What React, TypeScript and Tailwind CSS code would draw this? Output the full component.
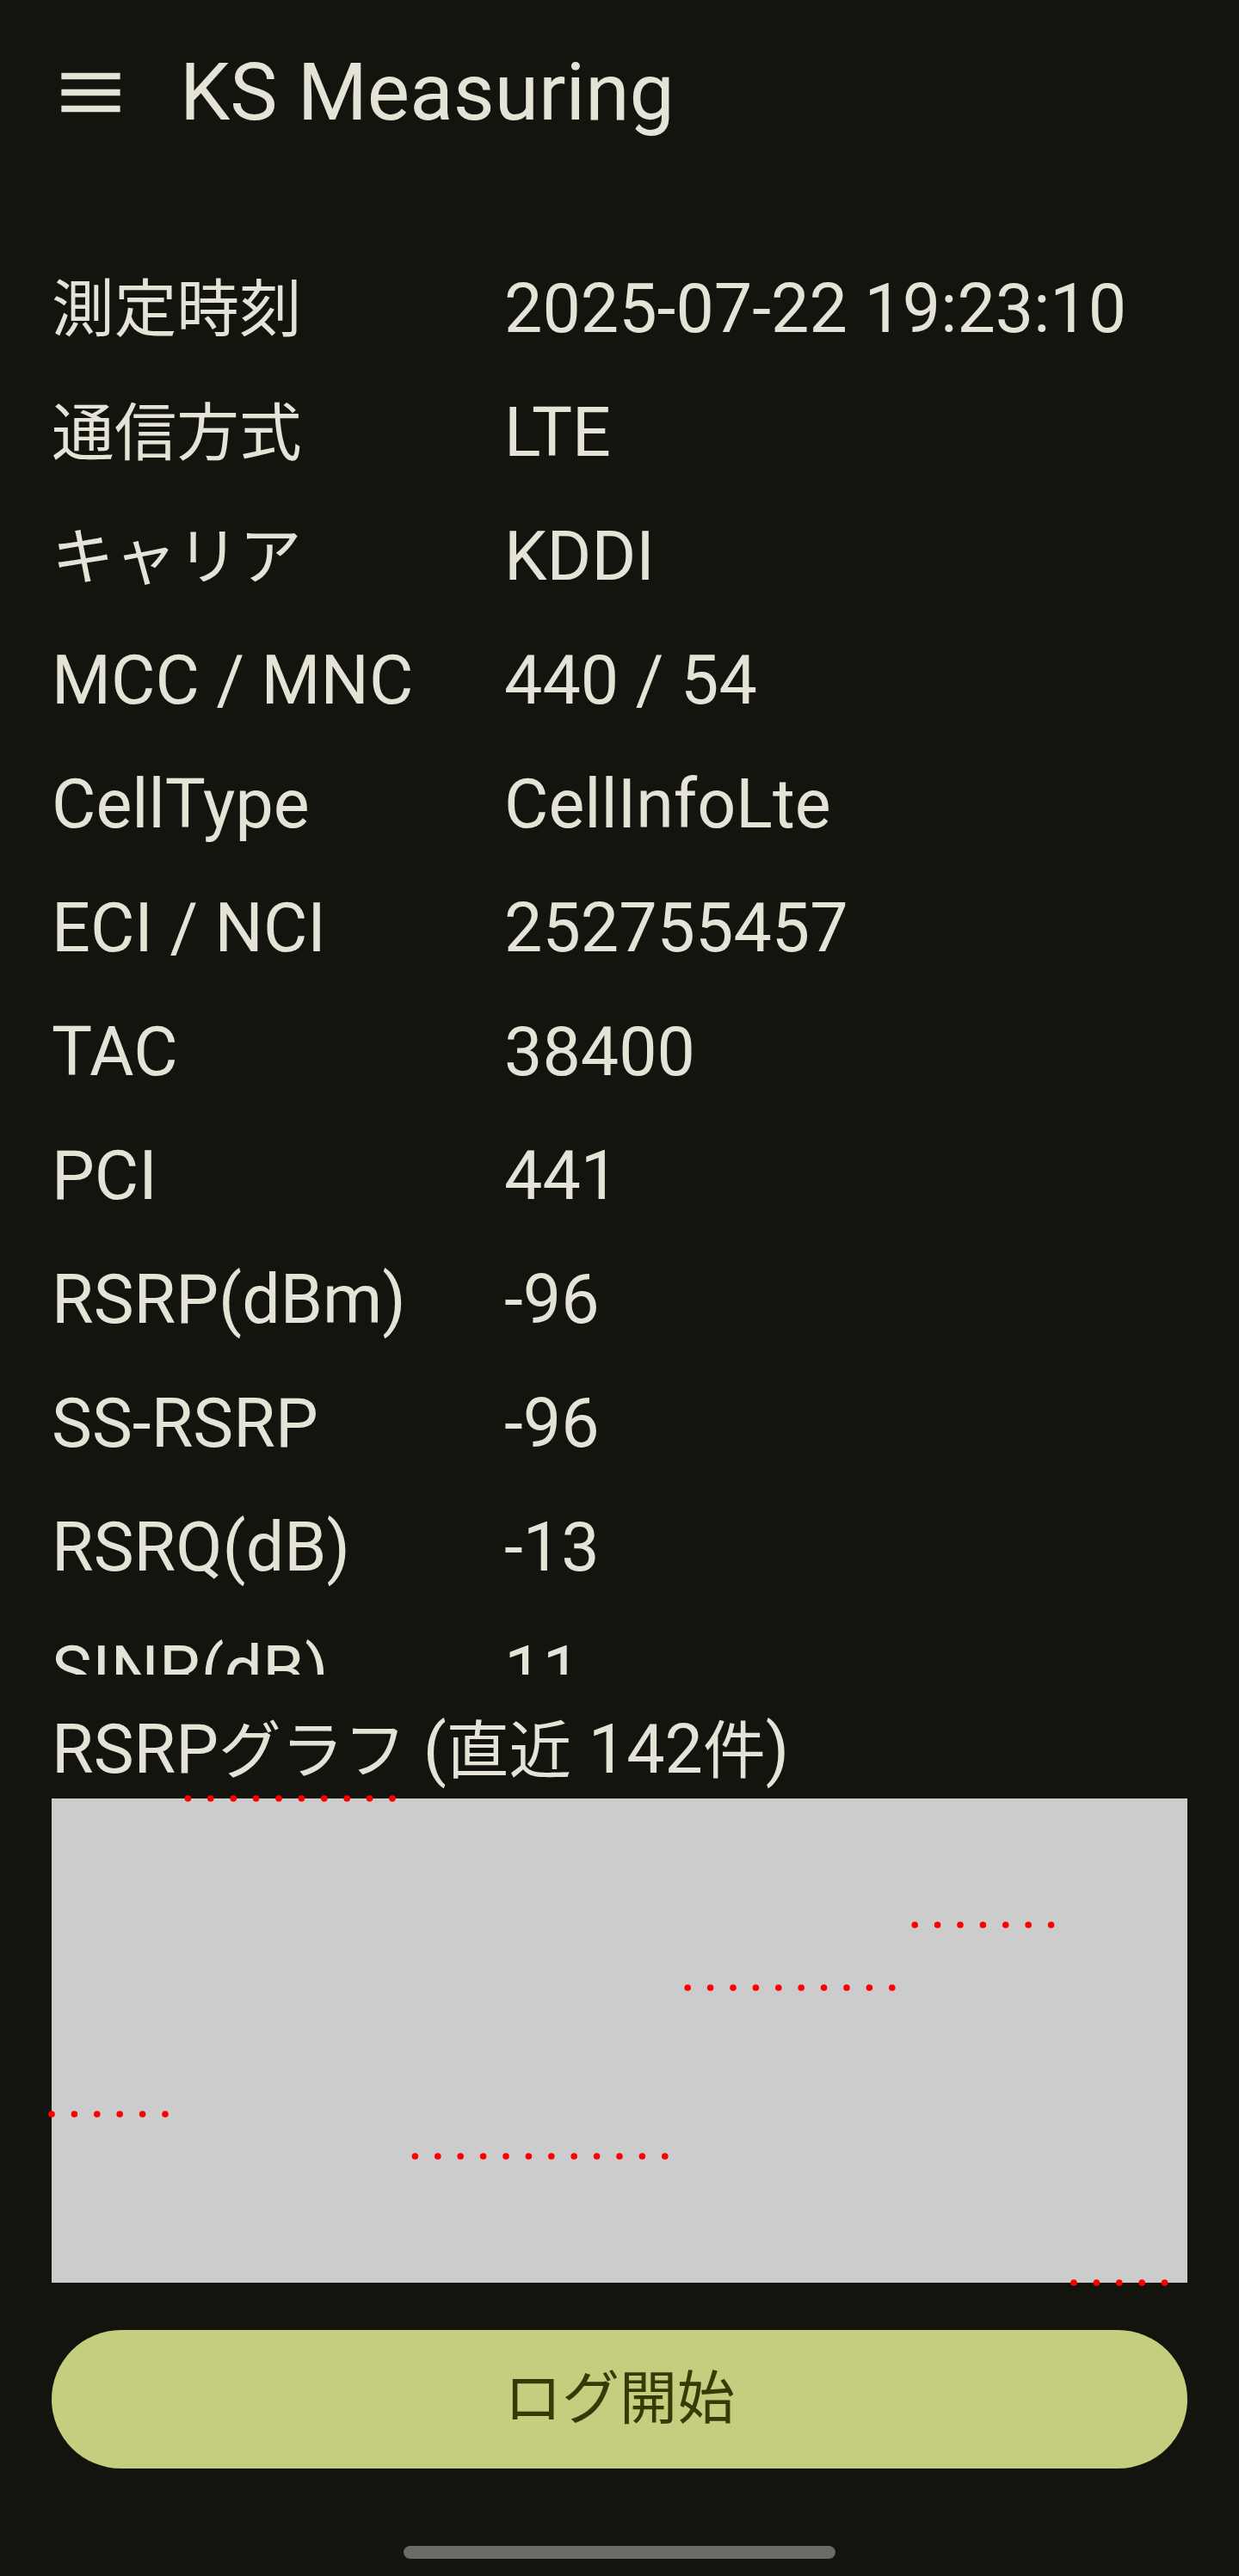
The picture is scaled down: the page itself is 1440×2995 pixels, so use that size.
const rows: [string, string][] = [
  ["測定時刻", "2025-07-22 19:23:10"],
  ["通信方式", "LTE"],
  ["キャリア", "KDDI"],
  ["MCC / MNC", "440 / 54"],
  ["CellType", "CellInfoLte"],
  ["ECI / NCI", "252755457"],
  ["TAC", "38400"],
  ["PCI", "441"],
  ["RSRP(dBm)", "-96"],
  ["SS-RSRP", "-96"],
  ["RSRQ(dB)", "-13"],
  ["SINR(dB)", "11"],
  ["SS-SINR", "-"],
];

// runs of the rsrp graph: [point count, y inside the 563px box]
const runs: [number, number][] = [
  [6, 367],
  [10, 0],
  [12, 416],
  [10, 220],
  [7, 147],
  [5, 563],
];

// japanese glyphs render a bit smaller than the latin ones on the device
function Jp({ text }: { text: string }) {
  const parts = text.split(/([\u3000-\u9fff\uff00-\uffef]+)/);
  return (
    <>
      {parts.map((p, i) =>
        i % 2 === 1 ? (
          <span key={i} className="text-[0.92em]">
            {p}
          </span>
        ) : (
          p
        )
      )}
    </>
  );
}

function RsrpChart() {
  const dots: { x: number; y: number }[] = [];
  let i = 0;
  runs.forEach(([n, y]) => {
    for (let k = 0; k < n; k++) {
      dots.push({ x: i * 26.4, y });
      i++;
    }
  });
  return (
    <div className="mt-[10px] h-[563px] w-full bg-[#cccccc]">
      <svg width="100%" height="100%" viewBox="0 0 1320 563" className="overflow-visible">
        {dots.map((d, k) => (
          <circle key={k} cx={d.x} cy={d.y} r={3.8} fill="#ff0000" />
        ))}
      </svg>
    </div>
  );
}

export default function App() {
  return (
    <div className="flex h-[2995px] w-[1440px] flex-col bg-[#13140e] font-['Roboto','Noto_Sans_CJK_JP',sans-serif] text-[#e4e3d6]">
      {/* top bar */}
      <div className="flex h-[215px] shrink-0 items-center pl-[60px]">
        <svg width="91" height="91" viewBox="0 0 24 24" fill="#e4e3d6">
          <path d="M3 18h18v-2H3v2zm0-5h18v-2H3v2zm0-7v2h18V6H3z" />
        </svg>
        <h1 className="ml-[58px] text-[93px] leading-none font-normal">KS Measuring</h1>
      </div>

      <div className="px-[60px]">
        <div className="h-[1732px] overflow-hidden pt-[72px]">
          {rows.map(([label, value]) => (
            <div key={label} className="grid h-[144px] grid-cols-[526px_1fr] items-center text-[79px] leading-[94px]">
              <span>
                <Jp text={label} />
              </span>
              <span>{value}</span>
            </div>
          ))}
        </div>

        <div className="mt-[40px] h-[94px] text-[79px] leading-[94px]">
          <Jp text="RSRPグラフ (直近 142件)" />
        </div>
        <RsrpChart />

        <button className="mt-[55px] flex h-[161px] w-full items-center justify-center rounded-full bg-[#c5cd7e] text-[67px] leading-none text-[#353b06]">
          ログ開始
        </button>
      </div>

      <div className="mx-auto mt-[90px] h-[15px] w-[502px] rounded-full bg-[#6a6a66]" />
    </div>
  );
}
